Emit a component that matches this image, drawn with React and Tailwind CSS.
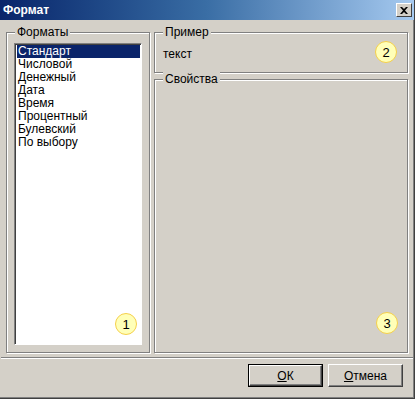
import React from 'react';

const formats = ['Стандарт', 'Числовой', 'Денежный', 'Дата', 'Время', 'Процентный', 'Булевский', 'По выбору'];

const Badge = ({ n, className }) => (
    <div className={`absolute w-[22px] h-[22px] rounded-full bg-[#ffffb8] border border-[#f5d04a] flex items-center justify-center text-[13px] text-black leading-none ${className}`}>
        {n}
    </div>
);

const Group = ({ label, className, children }) => (
    <div className={`relative border border-[#808080] shadow-[inset_1px_1px_0_#fff,1px_1px_0_#fff] ${className}`}>
        <span className="absolute -top-[8px] left-[8px] bg-[#d4d0c8] px-[2px] leading-[14px]">{label}</span>
        {children}
    </div>
);

const Button = ({ children, isDefault }) => (
    <button className={`w-[75px] h-[23px] bg-[#d4d0c8] text-[12px] ${isDefault ? 'border border-black' : ''}`}>
        <div className="w-full h-full border-t border-l border-t-white border-l-white border-r border-b border-r-[#404040] border-b-[#404040] shadow-[inset_-1px_-1px_0_#808080] flex items-center justify-center">
            {children}
        </div>
    </button>
);

export default function App() {
    return (
        <div className="w-[415px] h-[399px] bg-[#d4d0c8] text-black text-[12px] flex flex-col border-r border-b border-[#404040] shadow-[inset_-1px_-1px_0_#808080]" style={{ fontFamily: '"Liberation Sans", Arial, sans-serif' }}>
            {/* title bar */}
            <div className="h-[20px] bg-gradient-to-r from-[#0a246a] via-[#3a6ea5] to-[#a6caf0] flex items-center justify-between pl-[3px] pr-[2px]">
                <span className="text-white font-bold text-[12px]">Формат</span>
                <div className="w-[16px] h-[14px] bg-[#d4d0c8] border-t border-l border-white border-r border-b border-r-[#404040] border-b-[#404040] flex items-center justify-center">
                    <svg width="8" height="7" viewBox="0 0 8 7"><path d="M0 0h2l2 2 2-2h2L5 3.5 8 7H6L4 5 2 7H0l3-3.5z" fill="#000" /></svg>
                </div>
            </div>

            <div className="flex gap-[4px] pl-[6px] pt-[12px]">
                <Group label="Форматы" className="w-[144px] h-[321px] pl-[7px] pr-[7px] pt-[10px] pb-[7px]">
                    <div className="relative h-full bg-white border-t border-l border-t-[#808080] border-l-[#808080] border-r border-b border-r-white border-b-white shadow-[inset_1px_1px_0_#404040]">
                        <div className="pt-[1px] pl-[2px] pr-[1px]">
                            {formats.map((f, i) => (
                                <div key={f} className={`h-[13px] leading-[13px] pl-[1px] ${i === 0 ? 'bg-[#0a246a] text-white' : ''}`}>{f}</div>
                            ))}
                        </div>
                        <Badge n="1" className="right-[4px] bottom-[9px]" />
                    </div>
                </Group>
                <div className="flex flex-col gap-[6px] w-[254px]">
                    <Group label="Пример" className="h-[41px]">
                        <span className="absolute left-[8px] top-[14px] leading-[14px]">текст</span>
                        <Badge n="2" className="right-[10px] top-[8px]" />
                    </Group>
                    <Group label="Свойства" className="h-[274px]">
                        <Badge n="3" className="right-[9px] bottom-[18px]" />
                    </Group>
                </div>
            </div>

            <div className="ml-[1px] mr-[1px] mt-[4px] border-t border-t-[#808080] border-b border-b-white" />

            <div className="flex justify-end gap-[5px] pr-[11px] pt-[5px]">
                <Button isDefault><span><u>О</u>К</span></Button>
                <Button><span><u>О</u>тмена</span></Button>
            </div>
        </div>
    );
}
